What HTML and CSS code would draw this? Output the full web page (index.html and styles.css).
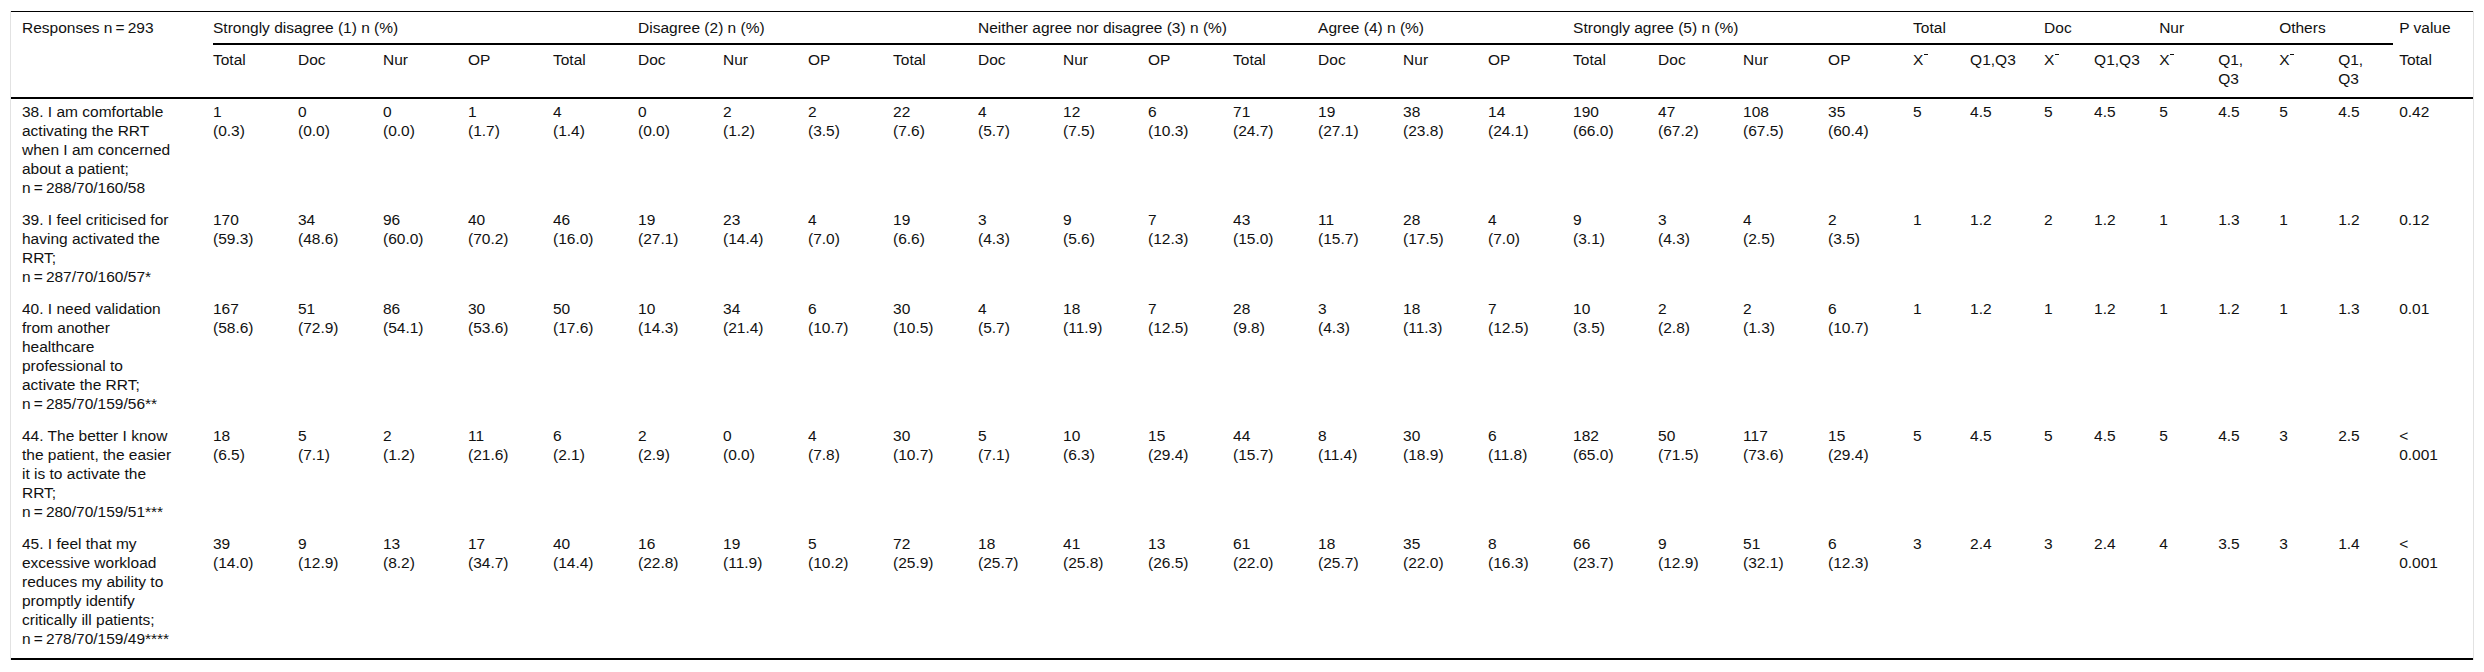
FILE: index.html
```html
<!DOCTYPE html>
<html lang="en">
<head>
<meta charset="utf-8">
<title>Table</title>
<link rel="stylesheet" href="styles.css">
</head>
<body>
<div class="wrap">
<table class="data">
<colgroup>
<col class="c-first">
<col class="c-n"><col class="c-n"><col class="c-n"><col class="c-n"><col class="c-n">
<col class="c-n"><col class="c-n"><col class="c-n"><col class="c-n"><col class="c-n">
<col class="c-n"><col class="c-n"><col class="c-n"><col class="c-n"><col class="c-n">
<col class="c-n"><col class="c-n"><col class="c-n"><col class="c-n"><col class="c-n">
<col class="c-tx"><col class="c-tq"><col class="c-dx"><col class="c-dq"><col class="c-nx"><col class="c-nq"><col class="c-ox"><col class="c-oq"><col class="c-p">
</colgroup>
<thead>
<tr class="r1">
<th class="resp" rowspan="2">Responses n&thinsp;=&thinsp;293</th>
<th class="grp" colspan="5">Strongly disagree (1) n (%)</th>
<th class="grp" colspan="4">Disagree (2) n (%)</th>
<th class="grp" colspan="4">Neither agree nor disagree (3) n (%)</th>
<th class="grp" colspan="3">Agree (4) n (%)</th>
<th class="grp" colspan="4">Strongly agree (5) n (%)</th>
<th class="grp" colspan="2">Total</th>
<th class="grp" colspan="2">Doc</th>
<th class="grp" colspan="2">Nur</th>
<th class="grp" colspan="2">Others</th>
<th class="pcol">P value</th>
</tr>
<tr class="r2">
<th>Total</th><th>Doc</th><th>Nur</th><th>OP</th>
<th>Total</th><th>Doc</th><th>Nur</th><th>OP</th>
<th>Total</th><th>Doc</th><th>Nur</th><th>OP</th>
<th>Total</th><th>Doc</th><th>Nur</th><th>OP</th>
<th>Total</th><th>Doc</th><th>Nur</th><th>OP</th>
<th>X<span class="xb"></span></th><th>Q1,Q3</th>
<th>X<span class="xb"></span></th><th>Q1,Q3</th>
<th>X<span class="xb"></span></th><th>Q1, Q3</th>
<th>X<span class="xb"></span></th><th>Q1, Q3</th>
<th class="pcol">Total</th>
</tr>
</thead>
<tbody>
<tr>
<td class="q">38. I am comfortable activating the RRT when I am concerned about a patient;<br>n&thinsp;=&thinsp;288/70/160/58</td>
<td>1<br>(0.3)</td><td>0<br>(0.0)</td><td>0<br>(0.0)</td><td>1<br>(1.7)</td>
<td>4<br>(1.4)</td><td>0<br>(0.0)</td><td>2<br>(1.2)</td><td>2<br>(3.5)</td>
<td>22<br>(7.6)</td><td>4<br>(5.7)</td><td>12<br>(7.5)</td><td>6<br>(10.3)</td>
<td>71<br>(24.7)</td><td>19<br>(27.1)</td><td>38<br>(23.8)</td><td>14<br>(24.1)</td>
<td>190<br>(66.0)</td><td>47<br>(67.2)</td><td>108<br>(67.5)</td><td>35<br>(60.4)</td>
<td>5</td><td>4.5</td><td>5</td><td>4.5</td><td>5</td><td>4.5</td><td>5</td><td>4.5</td>
<td class="pcol">0.42</td>
</tr>
<tr>
<td class="q">39. I feel criticised for having activated the RRT;<br>n&thinsp;=&thinsp;287/70/160/57*</td>
<td>170<br>(59.3)</td><td>34<br>(48.6)</td><td>96<br>(60.0)</td><td>40<br>(70.2)</td>
<td>46<br>(16.0)</td><td>19<br>(27.1)</td><td>23<br>(14.4)</td><td>4<br>(7.0)</td>
<td>19<br>(6.6)</td><td>3<br>(4.3)</td><td>9<br>(5.6)</td><td>7<br>(12.3)</td>
<td>43<br>(15.0)</td><td>11<br>(15.7)</td><td>28<br>(17.5)</td><td>4<br>(7.0)</td>
<td>9<br>(3.1)</td><td>3<br>(4.3)</td><td>4<br>(2.5)</td><td>2<br>(3.5)</td>
<td>1</td><td>1.2</td><td>2</td><td>1.2</td><td>1</td><td>1.3</td><td>1</td><td>1.2</td>
<td class="pcol">0.12</td>
</tr>
<tr>
<td class="q">40. I need validation from another healthcare professional to activate the RRT;<br>n&thinsp;=&thinsp;285/70/159/56**</td>
<td>167<br>(58.6)</td><td>51<br>(72.9)</td><td>86<br>(54.1)</td><td>30<br>(53.6)</td>
<td>50<br>(17.6)</td><td>10<br>(14.3)</td><td>34<br>(21.4)</td><td>6<br>(10.7)</td>
<td>30<br>(10.5)</td><td>4<br>(5.7)</td><td>18<br>(11.9)</td><td>7<br>(12.5)</td>
<td>28<br>(9.8)</td><td>3<br>(4.3)</td><td>18<br>(11.3)</td><td>7<br>(12.5)</td>
<td>10<br>(3.5)</td><td>2<br>(2.8)</td><td>2<br>(1.3)</td><td>6<br>(10.7)</td>
<td>1</td><td>1.2</td><td>1</td><td>1.2</td><td>1</td><td>1.2</td><td>1</td><td>1.3</td>
<td class="pcol">0.01</td>
</tr>
<tr>
<td class="q">44. The better I know the patient, the easier it is to activate the RRT;<br>n&thinsp;=&thinsp;280/70/159/51***</td>
<td>18<br>(6.5)</td><td>5<br>(7.1)</td><td>2<br>(1.2)</td><td>11<br>(21.6)</td>
<td>6<br>(2.1)</td><td>2<br>(2.9)</td><td>0<br>(0.0)</td><td>4<br>(7.8)</td>
<td>30<br>(10.7)</td><td>5<br>(7.1)</td><td>10<br>(6.3)</td><td>15<br>(29.4)</td>
<td>44<br>(15.7)</td><td>8<br>(11.4)</td><td>30<br>(18.9)</td><td>6<br>(11.8)</td>
<td>182<br>(65.0)</td><td>50<br>(71.5)</td><td>117<br>(73.6)</td><td>15<br>(29.4)</td>
<td>5</td><td>4.5</td><td>5</td><td>4.5</td><td>5</td><td>4.5</td><td>3</td><td>2.5</td>
<td class="pcol">&lt;<br>0.001</td>
</tr>
<tr>
<td class="q">45. I feel that my excessive workload reduces my ability to promptly identify critically ill patients;<br>n&thinsp;=&thinsp;278/70/159/49****</td>
<td>39<br>(14.0)</td><td>9<br>(12.9)</td><td>13<br>(8.2)</td><td>17<br>(34.7)</td>
<td>40<br>(14.4)</td><td>16<br>(22.8)</td><td>19<br>(11.9)</td><td>5<br>(10.2)</td>
<td>72<br>(25.9)</td><td>18<br>(25.7)</td><td>41<br>(25.8)</td><td>13<br>(26.5)</td>
<td>61<br>(22.0)</td><td>18<br>(25.7)</td><td>35<br>(22.0)</td><td>8<br>(16.3)</td>
<td>66<br>(23.7)</td><td>9<br>(12.9)</td><td>51<br>(32.1)</td><td>6<br>(12.3)</td>
<td>3</td><td>2.4</td><td>3</td><td>2.4</td><td>4</td><td>3.5</td><td>3</td><td>1.4</td>
<td class="pcol">&lt;<br>0.001</td>
</tr>
</tbody>
</table>
</div>
</body>
</html>
```

FILE: styles.css
```css
html, body {
  background: #ffffff;
}
body {
  margin: 0;
  padding: 11px 10px;
  font-family: "Liberation Sans", Arial, sans-serif;
  font-size: 15.5px;
  line-height: 19px;
  color: #111111;
}
.wrap {
  border-left: 1px solid #e2e2e2;
  border-right: 1px solid #e2e2e2;
}
.data {
  width: 100%;
  table-layout: fixed;
  border-collapse: separate;
  border-spacing: 0;
  border-top: 1px solid #000;
  border-bottom: 2px solid #000;
}
.c-first { width: 202px; }
.c-n { width: 85px; }
.c-tx { width: 57px; }
.c-tq { width: 74px; }
.c-dx { width: 50px; }
.c-dq { width: 65px; }
.c-nx { width: 59px; }
.c-nq { width: 61px; }
.c-ox { width: 59px; }
.c-oq { width: 55px; }
.c-p { width: 80px; }

.data th,
.data td {
  text-align: left;
  vertical-align: top;
  font-weight: normal;
  padding: 3px 18px 10px 0;
}
.data .r1 th {
  padding: 6px 18px 6px 0;
}
.data .r1 th.grp {
  border-bottom: 2px solid #000;
}
.data .r2 th {
  padding: 5px 18px 9px 0;
  border-bottom: 2px solid #000;
}
.data th.resp {
  padding: 6px 36px 0 11px;
  border-bottom: 2px solid #000;
}
.data td.q {
  padding-left: 11px;
  padding-right: 36px;
}
.data .pcol,
.data .r1 th.pcol,
.data .r2 th.pcol {
  padding-left: 6px;
  padding-right: 20px;
}
.xb {
  display: inline-block;
  width: 4px;
  height: 0;
  border-top: 1px solid #111111;
  vertical-align: top;
  margin: 4px 0 0 1px;
}
```
